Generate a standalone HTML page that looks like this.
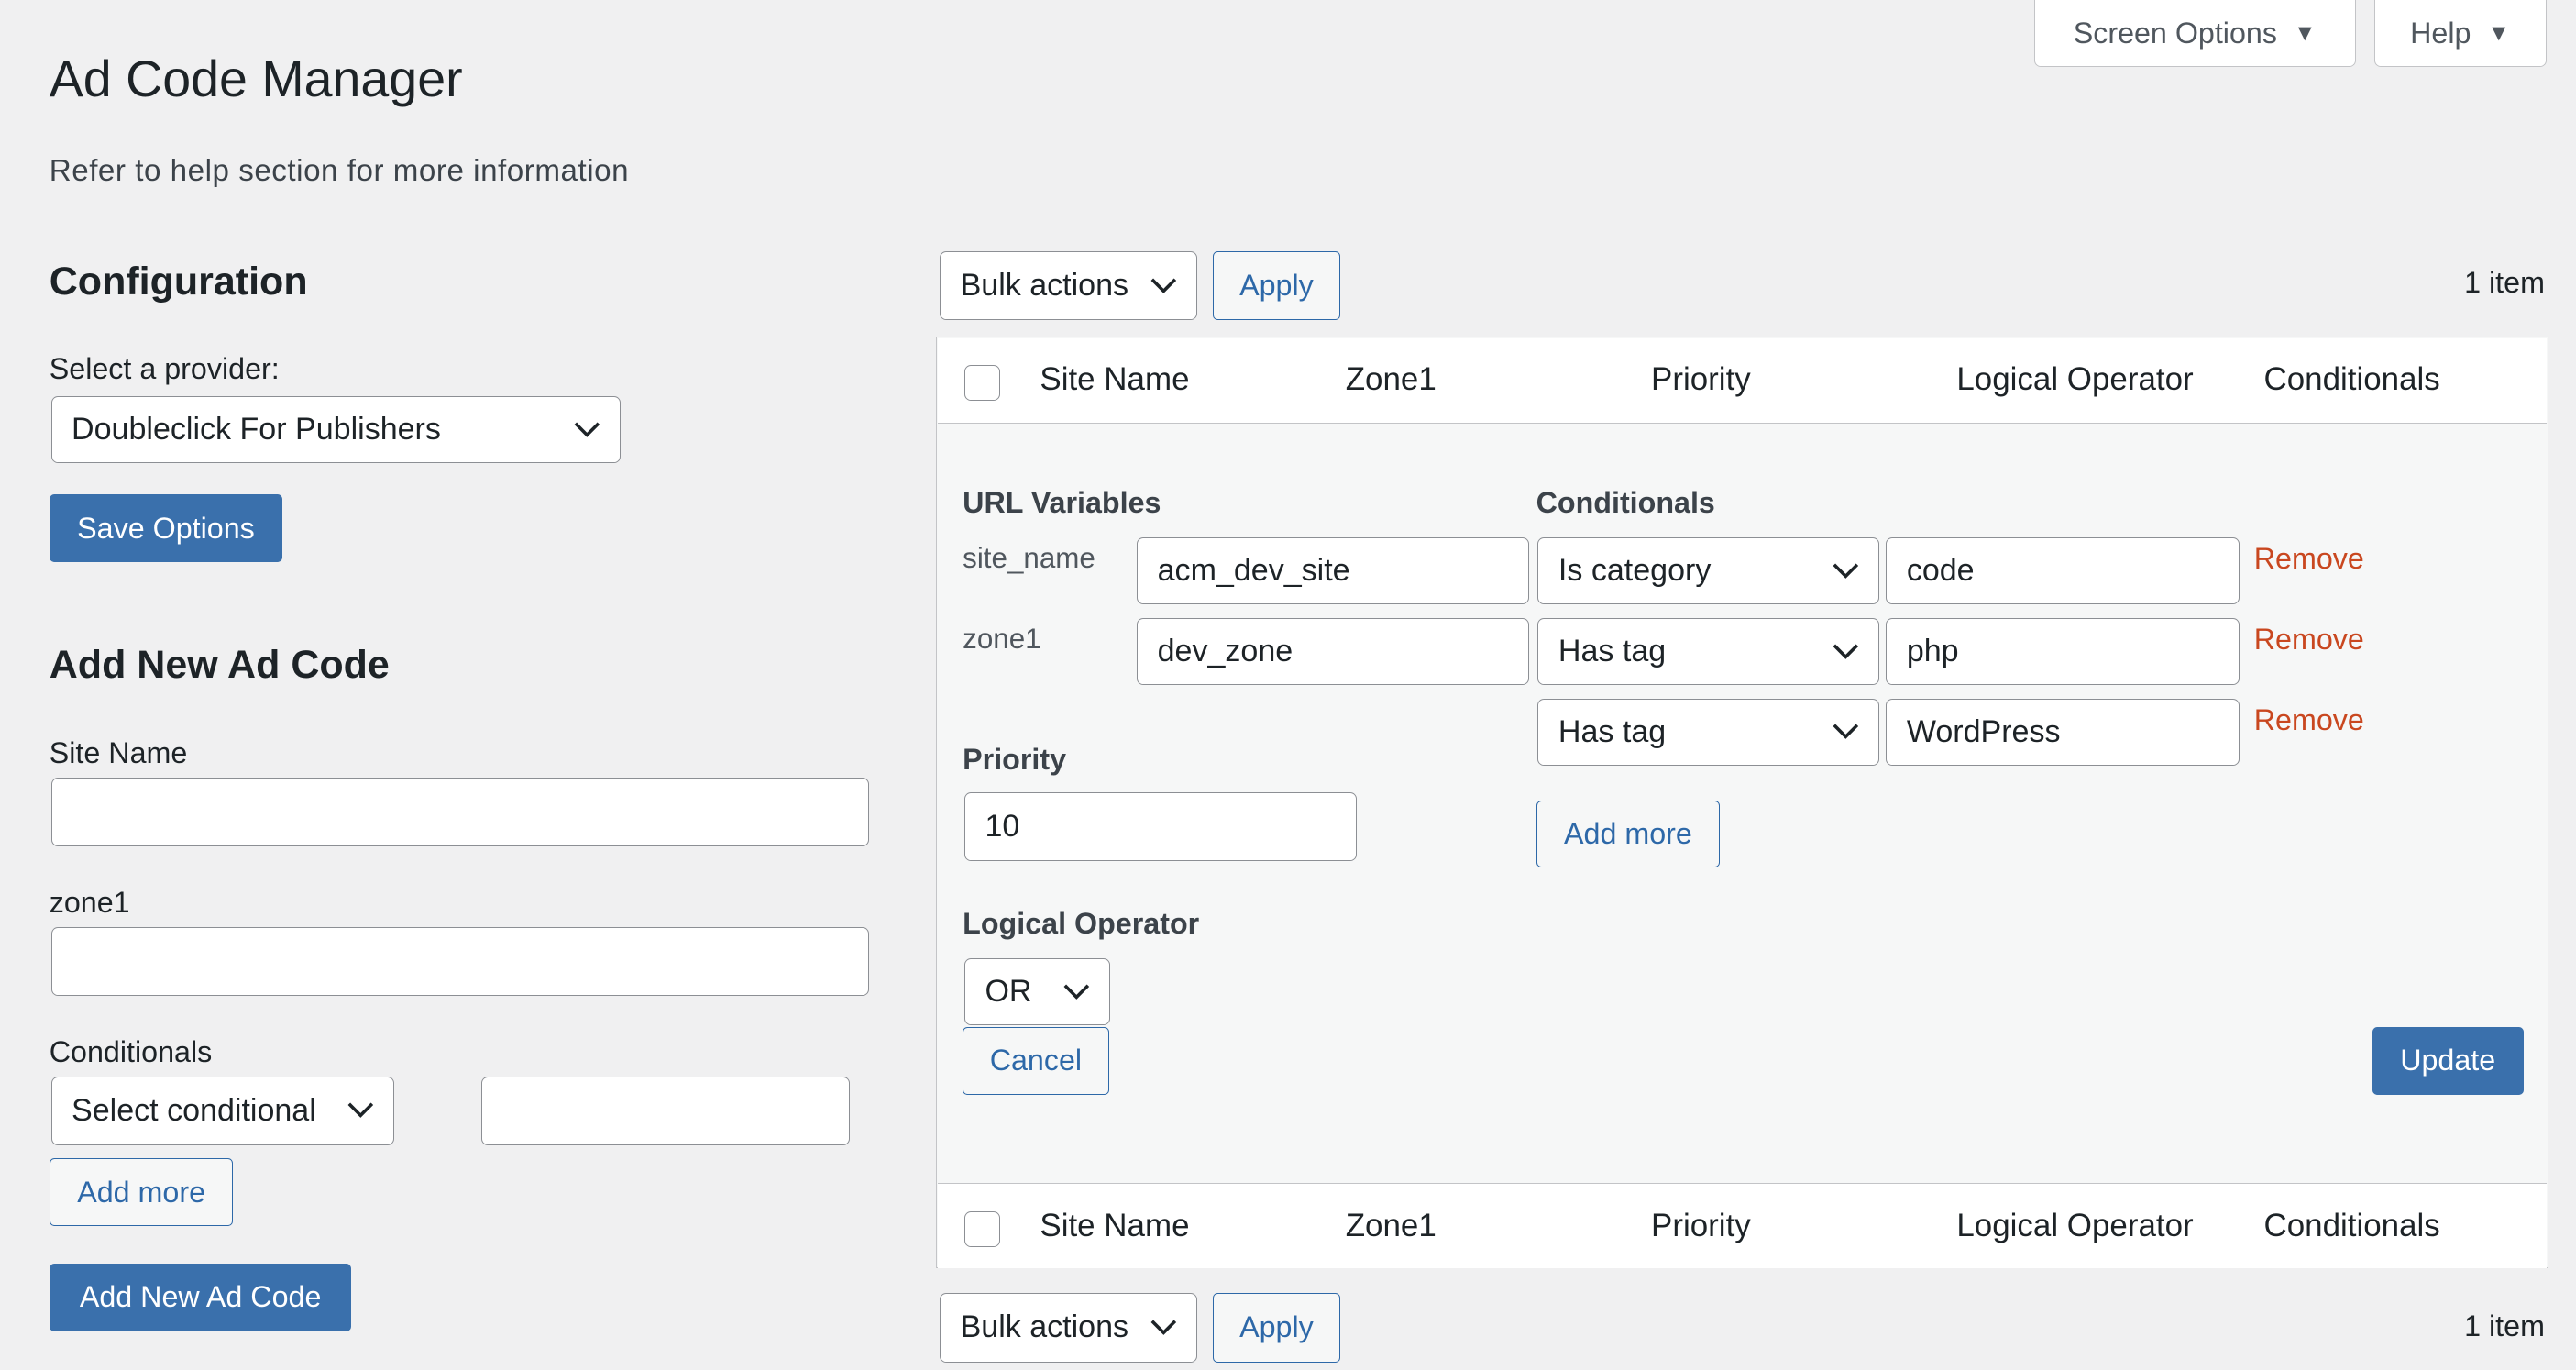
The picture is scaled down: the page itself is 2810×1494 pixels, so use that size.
<!DOCTYPE html>
<html><head><meta charset="utf-8"><style>
html,body{margin:0;padding:0;background:#f0f0f1;overflow:hidden}
body{width:2810px;height:1494px}
#r{zoom:1.79209;position:relative;width:1568px;height:834px;font-family:"Liberation Sans",sans-serif;color:#1d2327;font-size:18px}
.a{position:absolute;white-space:nowrap}
.in{position:absolute;box-sizing:border-box;background:#fff;border:1px solid #8c8f94;border-radius:4px;padding-left:12px;display:flex;align-items:center;font-size:19px}
.sel svg{position:absolute;right:12px;top:50%;margin-top:-5px}
.bp{position:absolute;box-sizing:border-box;background:#3a70ac;color:#fff;border-radius:3px;display:flex;align-items:center;justify-content:center;font-size:18px}
.bs{position:absolute;box-sizing:border-box;background:#f6f7f7;color:#2d68a8;border:1px solid #2d68a8;border-radius:3px;display:flex;align-items:center;justify-content:center;font-size:18px}
.b{font-weight:bold;color:#3c434a}
.rm{color:#c9471f;font-size:18px}
.cb{position:absolute;width:22px;height:22px;box-sizing:border-box;border:1px solid #8c8f94;border-radius:4px;background:#fff}
.th{font-size:19.5px}
</style></head><body><div id="r">
<div class="a" style="left:1238px;top:0;width:196px;height:41px;background:#fff;border:1px solid #c3c4c7;border-top:0;border-radius:0 0 4px 4px;box-sizing:border-box;color:#50575e;font-size:18px;display:flex;align-items:center;justify-content:center">Screen Options&nbsp;&nbsp;<span style="font-size:14px">▼</span></div>
<div class="a" style="left:1445px;top:0;width:105px;height:41px;background:#fff;border:1px solid #c3c4c7;border-top:0;border-radius:0 0 4px 4px;box-sizing:border-box;color:#50575e;font-size:18px;display:flex;align-items:center;justify-content:center">Help&nbsp;&nbsp;<span style="font-size:14px">▼</span></div>

<div class="a" style="left:30px;top:30px;font-size:31px">Ad Code Manager</div>
<div class="a" style="left:30px;top:94px;font-size:18.5px;color:#3c434a;letter-spacing:0.3px">Refer to help section for more information</div>
<div class="a" style="left:30px;top:158px;font-size:24px;font-weight:bold">Configuration</div>
<div class="a" style="left:30px;top:214px;font-size:18px">Select a provider:</div>
<div class="in sel" style="left:31px;top:241px;width:347px;height:41px">Doubleclick For Publishers<svg width="16" height="10"><path d="M1 1l7 7 7-7" stroke="#1d2327" stroke-width="2" fill="none"/></svg></div>
<div class="bp" style="left:30px;top:301px;width:142px;height:41px">Save Options</div>

<div class="a" style="left:30px;top:391px;font-size:24px;font-weight:bold">Add New Ad Code</div>
<div class="a" style="left:30px;top:448px">Site Name</div>
<div class="in" style="left:31px;top:473px;width:498px;height:42px"></div>
<div class="a" style="left:30px;top:539px">zone1</div>
<div class="in" style="left:31px;top:564px;width:498px;height:42px"></div>
<div class="a" style="left:30px;top:630px">Conditionals</div>
<div class="in sel" style="left:31px;top:655px;width:209px;height:42px">Select conditional<svg width="16" height="10"><path d="M1 1l7 7 7-7" stroke="#1d2327" stroke-width="2" fill="none"/></svg></div>
<div class="in" style="left:293px;top:655px;width:224px;height:42px"></div>
<div class="bs" style="left:30px;top:705px;width:112px;height:41px">Add more</div>
<div class="bp" style="left:30px;top:769px;width:184px;height:41px">Add New Ad Code</div>

<div class="in sel" style="left:572px;top:153px;width:157px;height:42px">Bulk actions<svg width="16" height="10"><path d="M1 1l7 7 7-7" stroke="#1d2327" stroke-width="2" fill="none"/></svg></div>
<div class="bs" style="left:738px;top:153px;width:78px;height:42px">Apply</div>
<div class="a" style="left:1500px;top:162px;font-size:18px">1 item</div>

<div class="a" style="left:570px;top:205px;width:981px;height:567px;border:1px solid #c3c4c7;box-sizing:border-box;background:#f6f7f7"></div>
<div class="a" style="left:571px;top:206px;width:979px;height:51px;background:#fff;border-bottom:1px solid #c3c4c7"></div>
<div class="cb" style="left:587px;top:222px"></div>
<div class="a th" style="left:633px;top:220px">Site Name</div>
<div class="a th" style="left:819px;top:220px">Zone1</div>
<div class="a th" style="left:1005px;top:220px">Priority</div>
<div class="a th" style="left:1191px;top:220px">Logical Operator</div>
<div class="a th" style="left:1378px;top:220px">Conditionals</div>

<div class="a b" style="left:586px;top:296px">URL Variables</div>
<div class="a b" style="left:935px;top:296px">Conditionals</div>
<div class="a" style="left:586px;top:330px;color:#50575e;font-size:17.5px">site_name</div>
<div class="a" style="left:586px;top:379px;color:#50575e;font-size:17.5px">zone1</div>
<div class="in" style="left:692px;top:327px;width:239px;height:41px">acm_dev_site</div>
<div class="in" style="left:692px;top:376px;width:239px;height:41px">dev_zone</div>
<div class="in sel" style="left:936px;top:327px;width:208px;height:41px">Is category<svg width="16" height="10"><path d="M1 1l7 7 7-7" stroke="#1d2327" stroke-width="2" fill="none"/></svg></div>
<div class="in sel" style="left:936px;top:376px;width:208px;height:41px">Has tag<svg width="16" height="10"><path d="M1 1l7 7 7-7" stroke="#1d2327" stroke-width="2" fill="none"/></svg></div>
<div class="in sel" style="left:936px;top:425px;width:208px;height:41px">Has tag<svg width="16" height="10"><path d="M1 1l7 7 7-7" stroke="#1d2327" stroke-width="2" fill="none"/></svg></div>
<div class="in" style="left:1148px;top:327px;width:215px;height:41px">code</div>
<div class="in" style="left:1148px;top:376px;width:215px;height:41px">php</div>
<div class="in" style="left:1148px;top:425px;width:215px;height:41px">WordPress</div>
<div class="a rm" style="left:1372px;top:330px">Remove</div>
<div class="a rm" style="left:1372px;top:379px">Remove</div>
<div class="a rm" style="left:1372px;top:428px">Remove</div>
<div class="a b" style="left:586px;top:452px">Priority</div>
<div class="in" style="left:587px;top:482px;width:239px;height:42px">10</div>
<div class="bs" style="left:935px;top:487px;width:112px;height:41px">Add more</div>
<div class="a b" style="left:586px;top:552px">Logical Operator</div>
<div class="in sel" style="left:587px;top:583px;width:89px;height:41px">OR<svg width="16" height="10"><path d="M1 1l7 7 7-7" stroke="#1d2327" stroke-width="2" fill="none"/></svg></div>
<div class="bs" style="left:586px;top:625px;width:89px;height:41px">Cancel</div>
<div class="bp" style="left:1444px;top:625px;width:92px;height:41px">Update</div>

<div class="a" style="left:571px;top:720px;width:979px;height:51px;background:#fff;border-top:1px solid #c3c4c7"></div>
<div class="cb" style="left:587px;top:737px"></div>
<div class="a th" style="left:633px;top:735px">Site Name</div>
<div class="a th" style="left:819px;top:735px">Zone1</div>
<div class="a th" style="left:1005px;top:735px">Priority</div>
<div class="a th" style="left:1191px;top:735px">Logical Operator</div>
<div class="a th" style="left:1378px;top:735px">Conditionals</div>

<div class="in sel" style="left:572px;top:787px;width:157px;height:42px">Bulk actions<svg width="16" height="10"><path d="M1 1l7 7 7-7" stroke="#1d2327" stroke-width="2" fill="none"/></svg></div>
<div class="bs" style="left:738px;top:787px;width:78px;height:42px">Apply</div>
<div class="a" style="left:1500px;top:797px;font-size:18px">1 item</div>
</div></body></html>
